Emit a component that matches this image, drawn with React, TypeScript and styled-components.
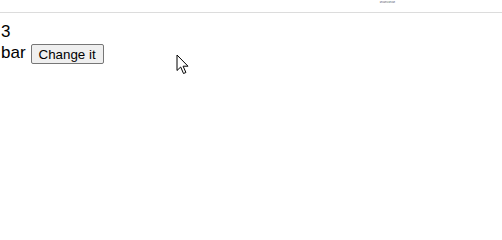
import React, { useState } from "react";
import styled, { createGlobalStyle } from "styled-components";

const GlobalStyle = createGlobalStyle`
  html, body {
    margin: 0;
    padding: 0;
    background: #ffffff;
  }
  body {
    font-family: Arial, "Liberation Sans", sans-serif;
    font-size: 17px;
    color: #000000;
  }
`;

const Page = styled.div`
  position: relative;
  width: 502px;
  height: 203px;
  overflow: hidden;
`;

const TopBar = styled.div`
  height: 12px;
  border-bottom: 1px solid #dcdcdc;
  display: flex;
  justify-content: flex-end;
  align-items: flex-start;
  padding-right: 107px;
`;

const TinyLabel = styled.span`
  font-size: 4px;
  line-height: 4px;
  color: #6f7680;
`;

const Content = styled.div`
  padding: 9px 0 0 1px;
  line-height: 19px;
`;

const Line = styled.div`
  display: flex;
  align-items: center;
  gap: 5px;
`;

const Button = styled.button`
  font-family: Arial, "Liberation Sans", sans-serif;
  font-size: 13.33px;
  color: #000;
  background: #efefef;
  border: 1px solid #767676;
  border-radius: 2px;
  padding: 1px 7px;
  height: 20px;
  margin-top: 3px;
  cursor: default;
`;

const Cursor = styled.svg`
  position: absolute;
  left: 176px;
  top: 54px;
`;

export default function App() {
  const [count, setCount] = useState(3);
  const [label, setLabel] = useState("bar");

  return (
    <Page>
      <GlobalStyle />
      <TopBar>
        <TinyLabel>ичичичи</TinyLabel>
      </TopBar>
      <Content>
        <div>{count}</div>
        <Line>
          <span>{label}</span>
          <Button
            onClick={() => {
              setCount((c) => c + 1);
              setLabel((l) => (l === "bar" ? "foo" : "bar"));
            }}
          >
            Change it
          </Button>
        </Line>
      </Content>
      <Cursor width="15" height="21" viewBox="0 0 15 21">
        <path
          d="M1 1 L1 16.5 L4.7 13 L7.5 19.5 L9.9 18.5 L7.1 12.2 L12 12.2 Z"
          fill="#ffffff"
          stroke="#000000"
          strokeWidth="1"
          strokeLinejoin="miter"
        />
      </Cursor>
    </Page>
  );
}
